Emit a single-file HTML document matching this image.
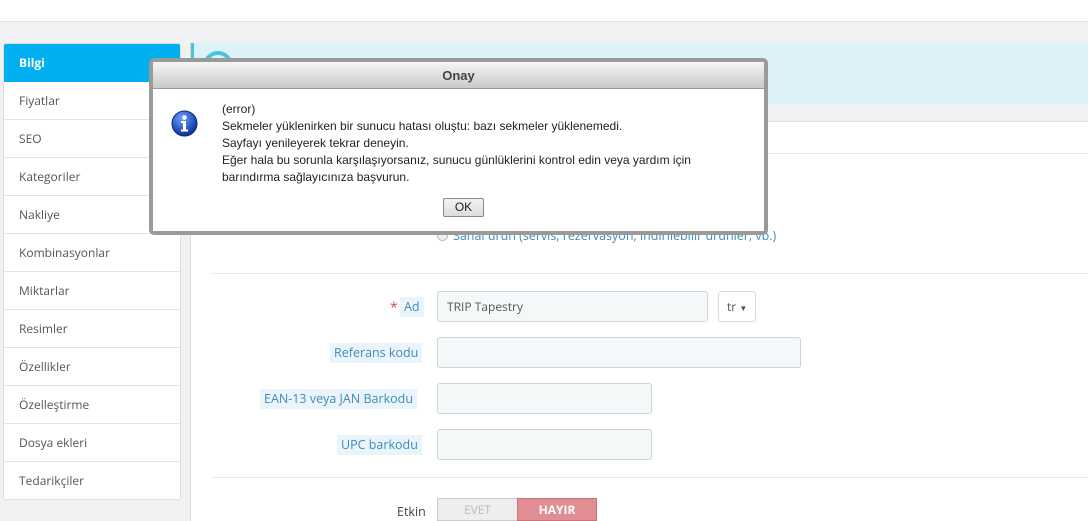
<!DOCTYPE html>
<html><head><meta charset="utf-8"><style>
*{box-sizing:border-box;margin:0;padding:0}
body{width:1088px;height:521px;overflow:hidden;background:#eff1f2;font-family:"Open Sans","Liberation Sans",sans-serif;position:relative}
.top{position:absolute;left:0;top:0;width:1088px;height:22px;background:#fff;border-bottom:1px solid #dcdfe0}
.side{position:absolute;left:3px;top:43px;width:178px;height:457px;background:#fff;border:1px solid #dde0e2;border-radius:3px;overflow:hidden}
.side div{height:38px;border-bottom:1px solid #e2e4e6;padding-left:15px;line-height:37px;font-size:12px;color:#555}
.side div.a{background:#00aff0;color:#fff;font-weight:bold;border-color:#00aff0}
.main{position:absolute;left:190px;top:43px;width:898px;height:478px;background:#fff;border-left:1px solid #d8dbdd}
.alert{position:absolute;left:0;top:0;width:898px;height:61px;background:#dcf1f8;border-left:3px solid #4bc4db}
.circ{position:absolute;left:9px;top:8px;width:30px;height:30px;border:4px solid #4bc4db;border-radius:50%}
.gs{position:absolute;left:0;top:61px;width:898px;height:18px;background:#eff1f2;border-bottom:1px solid #dde0e2}
.hr{position:absolute;height:1px;background:#e6e8ea}
.lbl{position:absolute;font-size:12.5px;color:#3f8bb8;background:#eaf5fb;padding:2px 4px;height:20px;line-height:16px}
.inp{position:absolute;background:#f5f8f9;border:1px solid #c7d6db;border-radius:3px;height:31px;font-size:12px;color:#555;line-height:29px;padding-left:9px}
.dlg{position:absolute;left:149px;top:58px;width:619px;height:177px;background:#9a9a9a;border-radius:5px;padding:4px}
.dlg .in{background:#fff;width:100%;height:100%;position:relative}
.tb{height:27px;background:linear-gradient(#f6f6f6,#c9c9c9);border-bottom:1px solid #999;text-align:center;font:bold 13px "Liberation Sans",Arial,sans-serif;color:#444;line-height:27px}
.txt{position:absolute;left:69px;top:39px;font:12px/17px "Liberation Sans",Arial,sans-serif;color:#222}
.ok{position:absolute;left:290px;top:136px;width:41px;height:19px;border:1px solid #888;background:linear-gradient(#f4f4f4,#dcdcdc);font:12px/17px "Liberation Sans",Arial,sans-serif;text-align:center;color:#222;border-radius:2px}
</style></head><body>
<div class="top"></div>
<div class="side">
<div class="a">Bilgi</div><div>Fiyatlar</div><div>SEO</div><div>Kategoriler</div><div>Nakliye</div><div>Kombinasyonlar</div><div>Miktarlar</div><div>Resimler</div><div>Özellikler</div><div>Özelleştirme</div><div>Dosya ekleri</div><div style="border:none">Tedarikçiler</div>
</div>
<div class="main">
<div class="alert"><div class="circ"></div></div>
<div class="gs"></div>
<div class="hr" style="left:20px;top:110px;width:878px"></div>
<div style="position:absolute;left:246px;top:184px;font-size:12.5px;color:#3f8bb8;white-space:nowrap"><span style="display:inline-block;width:11px;height:11px;border:1px solid #bbb;border-radius:50%;background:#eee;vertical-align:-1px;margin-right:5px"></span>Sanal ürün (servis, rezervasyon, indirilebilir ürünler, vb.)</div>
<div class="hr" style="left:20px;top:230px;width:878px"></div>
<span style="position:absolute;left:199px;top:255px;color:#e0474c;font-size:14px">*</span>
<div class="lbl" style="left:209px;top:254px">Ad</div>
<div class="inp" style="left:246px;top:248px;width:271px">TRIP Tapestry</div>
<div class="inp" style="left:527px;top:248px;width:38px;background:#fff;border-color:#d7dcde;padding-left:8px">tr <span style="font-size:8px">▼</span></div>
<div class="lbl" style="left:139px;top:300px">Referans kodu</div>
<div class="inp" style="left:246px;top:294px;width:364px"></div>
<div class="lbl" style="left:69px;top:346px">EAN-13 veya JAN Barkodu</div>
<div class="inp" style="left:246px;top:340px;width:215px"></div>
<div class="lbl" style="left:146px;top:392px">UPC barkodu</div>
<div class="inp" style="left:246px;top:386px;width:215px"></div>
<div class="hr" style="left:20px;top:434px;width:878px"></div>
<div style="position:absolute;left:206px;top:460px;font-size:12.5px;color:#444">Etkin</div>
<div style="position:absolute;left:246px;top:455px;width:81px;height:23px;background:#eee;border:1px solid #ccc;color:#bbb;font-size:12px;text-align:center;line-height:22px">EVET</div>
<div style="position:absolute;left:326px;top:455px;width:80px;height:23px;background:#e08d93;border:1px solid #c97379;color:#fff;font-weight:bold;font-size:12px;text-align:center;line-height:22px">HAYIR</div>
</div>
<div class="dlg"><div class="in">
<div class="tb">Onay</div>
<svg style="position:absolute;left:18px;top:48px" width="27" height="27" viewBox="0 0 27 27"><defs><radialGradient id="g" cx="40%" cy="30%" r="70%"><stop offset="0" stop-color="#6fa2ff"/><stop offset="1" stop-color="#0a2f9c"/></radialGradient></defs><circle cx="13.5" cy="13.5" r="12.5" fill="url(#g)" stroke="#0c2a7a"/><circle cx="13.5" cy="7.5" r="2.3" fill="#fff"/><path d="M10 11h5v8.5h2v2h-7v-2h2v-6.5h-2z" fill="#fff"/></svg>
<div class="txt">(error)<br>Sekmeler yüklenirken bir sunucu hatası oluştu: bazı sekmeler yüklenemedi.<br>Sayfayı yenileyerek tekrar deneyin.<br>Eğer hala bu sorunla karşılaşıyorsanız, sunucu günlüklerini kontrol edin veya yardım için<br>barındırma sağlayıcınıza başvurun.</div>
<div class="ok">OK</div>
</div></div>
</body></html>
